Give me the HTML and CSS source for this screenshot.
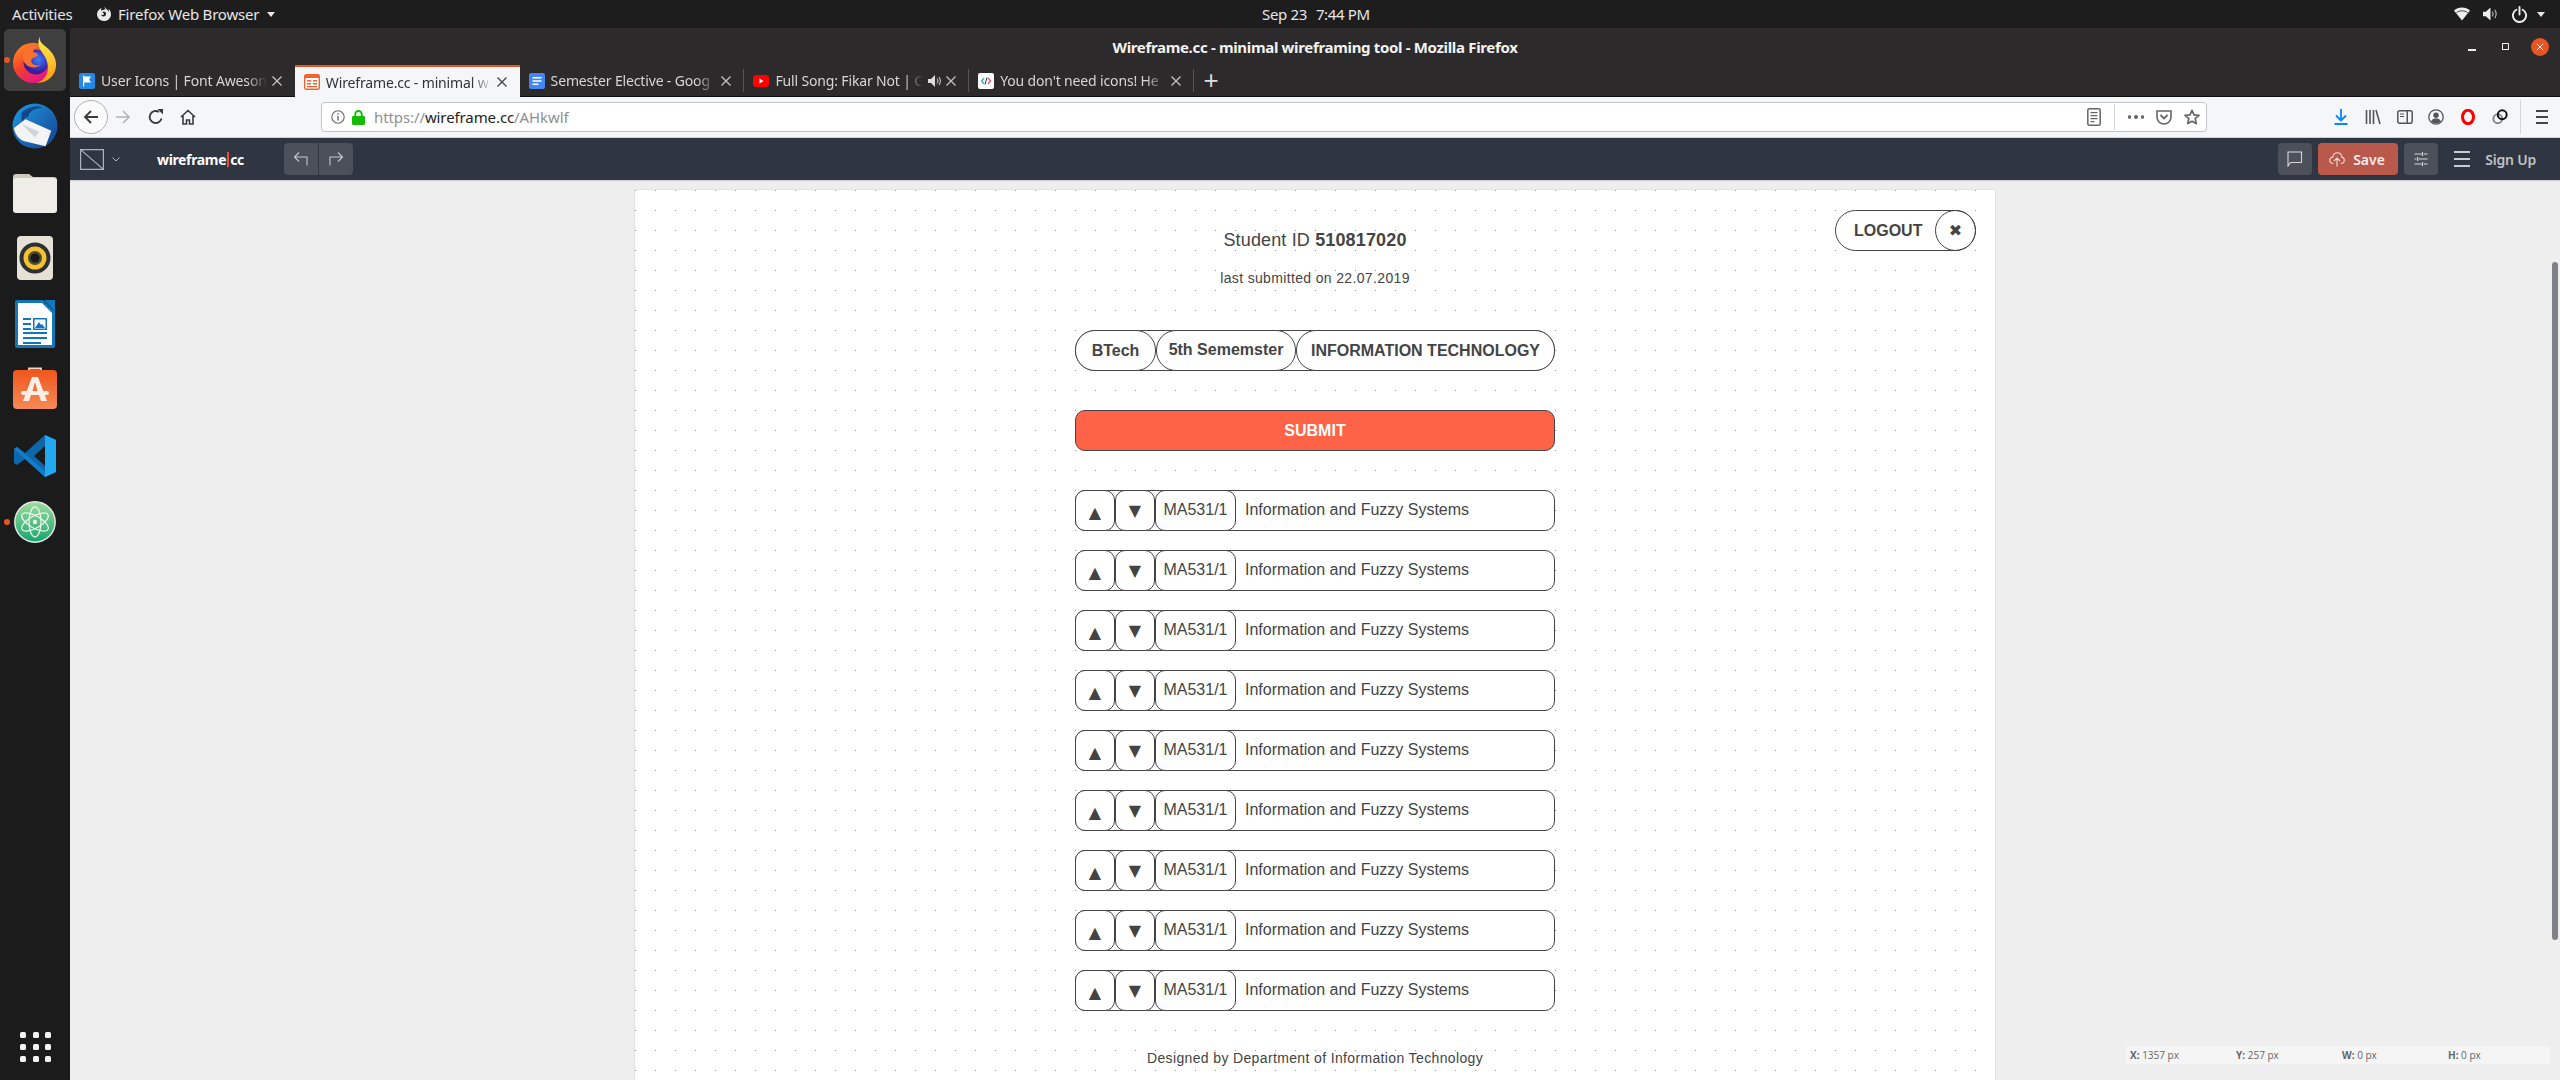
FILE: index.html
```html
<!DOCTYPE html>
<html lang="en">
<head>
<meta charset="utf-8">
<title>Wireframe.cc - minimal wireframing tool - Mozilla Firefox</title>
<link rel="stylesheet" href="styles.css">
</head>
<body>
<header class="topbar">
  <div class="top-left">
    <span class="activities">Activities</span>
    <svg class="app-icon" viewBox="0 0 16 16"><path fill="#e8e8e8" d="M8 1c.3 1 1 1.800 2 2.300C9 3.100 8 3.400 7.500 4 6.400 4 5.500 4.300 5 5c0-1 .1-2 .6-3C3 3 1 5.300 1 8.300 1 12 4 15 8 15s7-3 7-6.800c0-2.700-1.200-4.200-2.500-5.200.4 1 .4 2 .2 2.800C11.800 3.800 10 2.500 8 1zm-.2 4.600c1 0 2.200.8 2.200 2.400 0 1.500-1.200 2.600-2.600 2.500C6 10.400 5.200 9.400 5.300 8.500c.8.800 2.700.5 2.700-.5 0-.7-1-.7-1.300-1.200 0-.6.500-1.200 1.100-1.200z"/></svg>
    <span class="app-name">Firefox Web Browser</span>
    <span class="caret"></span>
  </div>
  <div class="clock"><span>Sep 23</span><span>7:44 PM</span></div>
  <div class="tray">
    <svg class="tray-wifi" viewBox="0 0 16 14"><path fill="#eee" d="M0 3.500C2 1.500 5 .5 8 .5s6 1 8 3l-8 10z"/><path fill="none" stroke="#1d1d1d" stroke-width=".8" d="M2.500 5.500C4 4.400 6 3.800 8 3.800s4 .6 5.500 1.700"/></svg>
    <svg class="tray-vol" viewBox="0 0 16 14"><path fill="#eee" d="M0 4.500h3L8 0v14L3 9.500H0z"/><path fill="none" stroke="#bbb" stroke-width="1.200" d="M10 4.500c1 1.500 1 3.500 0 5M12.500 2.500c2 2.500 2 6.500 0 9"/></svg>
    <svg class="tray-pow" viewBox="0 0 16 16"><path fill="none" stroke="#eee" stroke-width="1.800" stroke-linecap="round" d="M5 3.500a6.200 6.200 0 1 0 6 0M8 1v7"/></svg>
    <span class="caret tray-caret"></span>
  </div>
</header>

<div class="desktop">
  <nav class="dock">
    <div class="dock-item active">
      <span class="run-dot"></span>
      <span class="dock-tile">
        <svg class="ic-48" viewBox="0 0 48 50"><defs><linearGradient id="ffa" x1="0" y1="0" x2=".6" y2="1"><stop offset="0" stop-color="#ff9a1f"/><stop offset=".55" stop-color="#f5402b"/><stop offset="1" stop-color="#e31587"/></linearGradient><linearGradient id="ffb" x1="0" y1="0" x2="0" y2="1"><stop offset="0" stop-color="#fff44f"/><stop offset="1" stop-color="#ff980e"/></linearGradient><radialGradient id="ffc" cx=".6" cy=".4"><stop offset="0" stop-color="#3d7dff"/><stop offset="1" stop-color="#3a1a9e"/></radialGradient></defs><circle cx="22" cy="28" r="21" fill="url(#ffa)"/><circle cx="25" cy="27" r="13" fill="url(#ffc)"/><path fill="url(#ffb)" d="M29 0c-1 5 2 8 6 11 6 5 11 11 11 19 0 10-8 19-20 19 9-3 13-11 11-20-1-8-7-12-9-18-1-4 0-8 1-11z"/><path fill="#f7722c" d="M13 17c3-5 9-8 15-6-4 1-6 4-6 6 4 0 5 2 5 3-2 3-7 2-7 6 0 3 5 6 10 4-4 4-12 4-16-1-4-4-3-9-1-12z"/></svg>
      </span>
    </div>
    <div class="dock-item">
      <svg class="ic-48" viewBox="0 0 48 48"><defs><linearGradient id="tb" x1="0" y1="0" x2="1" y2="1"><stop offset="0" stop-color="#1b9de2"/><stop offset="1" stop-color="#173d8f"/></linearGradient></defs><circle cx="24" cy="24" r="23.500" fill="url(#tb)"/><path fill="#0d2c6c" d="M10 10c6-6 16-8 22-5-8 0-14 4-15 9-3 1-5 3-7 6z" opacity=".7"/><path fill="#f4f4f4" d="M2 26l12-9 27 12-6 16-22-5C7 38 3 32 2 26z"/><path fill="#cfd4dc" d="M10 22l18 8-4 6z"/></svg>
    </div>
    <div class="dock-item">
      <svg class="ic-folder" viewBox="0 0 44 42"><path fill="#cfc9b8" d="M3 3h13l4 3h21c1.500 0 3 1 3 3v8H0V6c0-2 1-3 3-3z"/><rect y="7" width="44" height="35" rx="3" fill="#efede7"/></svg>
    </div>
    <div class="dock-item">
      <svg class="ic-36" viewBox="0 0 36 44"><rect width="36" height="44" rx="4" fill="#e5e1d6"/><circle cx="18" cy="22" r="15.500" fill="#2f2f33"/><circle cx="18" cy="22" r="11.500" fill="#f2c230"/><circle cx="18" cy="22" r="7" fill="#504a30"/><circle cx="18" cy="22" r="4.500" fill="#1a1a1a"/></svg>
    </div>
    <div class="dock-item">
      <svg class="ic-40" viewBox="0 0 40 48"><path fill="#1276b8" d="M0 2a2 2 0 0 1 2-2h26l12 12v34a2 2 0 0 1-2 2H2a2 2 0 0 1-2-2z"/><path fill="#fff" d="M3 3h24l10 10v32H3z"/><path fill="#1276b8" d="M29 0l11 0v12z"/><path fill="#1276b8" d="M8 18h8v2H8zM8 23h8v2H8zM8 28h8v2H8zM8 32h24v2H8zM8 37h24v2H8zM8 42h18v2H8zM18 18h14v12H18z"/><path fill="#fff" d="M19.500 19.500h11v9h-11z"/><path fill="#1276b8" d="M20 28l4-6 2 3 1-1 3 4z"/></svg>
    </div>
    <div class="dock-item">
      <svg class="ic-44" viewBox="0 0 44 42"><defs><linearGradient id="sw" x1="0" y1="0" x2="0" y2="1"><stop offset="0" stop-color="#f0561d"/><stop offset="1" stop-color="#f58a56"/></linearGradient></defs><path fill="none" stroke="#e8d8cc" stroke-width="1.800" d="M16 4V1.500h12V4"/><rect y="3" width="44" height="39" rx="4" fill="url(#sw)"/><path fill="#fbeee6" d="M19 10h6l9 24h-6l-2-6h-8l-2 6h-6zM22 15l-2.500 9h5z"/><rect x="8" y="24" width="28" height="4" rx="2" fill="#fbeee6"/></svg>
    </div>
    <div class="dock-item">
      <svg class="ic-42" viewBox="0 0 42 42"><path fill="#0f6cb3" d="M31 0l11 5v32l-11 5L11 24 3 30l-3-2v-14l3-2 8 6zM31 11L20 21l11 10z" opacity=".95"/><path fill="#23a8f2" d="M31 0l11 5v32l-11 5z"/><path fill="#1385d2" d="M0 14l3-2 28 24v6L0 14z" opacity=".8"/></svg>
    </div>
    <div class="dock-item">
      <span class="run-dot"></span>
      <svg class="ic-42" viewBox="0 0 42 42"><defs><linearGradient id="at" x1="0" y1="0" x2="0" y2="1"><stop offset="0" stop-color="#9fdc9f"/><stop offset="1" stop-color="#16a56e"/></linearGradient></defs><circle cx="21" cy="21" r="20.200" fill="url(#at)" stroke="#e9e9e9" stroke-width="1.400"/><g fill="none" stroke="#e8f5ea" stroke-width="1.300"><ellipse cx="21" cy="21" rx="15" ry="6" transform="rotate(30 21 21)"/><ellipse cx="21" cy="21" rx="15" ry="6" transform="rotate(-30 21 21)"/><ellipse cx="21" cy="21" rx="15" ry="6" transform="rotate(90 21 21)"/></g><circle cx="21" cy="21" r="2.200" fill="#e8f5ea"/></svg>
    </div>
    <div class="dock-grid">
      <i></i><i></i><i></i><i></i><i></i><i></i><i></i><i></i><i></i>
    </div>
  </nav>

  <div class="browser">
    <div class="titlebar">
      <span></span>
      <span class="win-title">Wireframe.cc - minimal wireframing tool - Mozilla Firefox</span>
      <div class="win-controls">
        <span class="win-min"></span>
        <span class="win-max"></span>
        <span class="win-close"><svg class="x-10" viewBox="0 0 10 10"><path fill="none" stroke="#fff" stroke-width="1.200" d="M1 1l8 8M9 1l-8 8"/></svg></span>
      </div>
    </div>

    <div class="tabstrip">
      <div class="tab">
        <svg class="fav" viewBox="0 0 16 16"><rect width="16" height="16" rx="2" fill="#228ae6"/><path fill="#fff" d="M4 2.500h1.200v11H4zM5.200 3.500h6.800l-1.800 3 1.800 3H5.200z"/></svg>
        <span class="tab-text">User Icons | Font Aweson</span>
        <svg class="tab-x" viewBox="0 0 10 10"><path fill="none" stroke="#c4c4c4" stroke-width="1.300" d="M.5.500l9 9M9.500.500l-9 9"/></svg>
      </div>
      <div class="tab tab-active">
        <svg class="fav" viewBox="0 0 16 16"><rect x=".7" y=".7" width="14.600" height="14.600" rx="1.500" fill="#fff" stroke="#f0652f" stroke-width="1.400"/><path fill="#f0652f" d="M1 1h14v3H1zM3 6h4v1.500H3zM3 9h4v1.500H3zM9 6h4v1.500H9zM9 9h4v1.500H9zM3 12h10v1.200H3z"/></svg>
        <span class="tab-text">Wireframe.cc - minimal w</span>
        <svg class="tab-x" viewBox="0 0 10 10"><path fill="none" stroke="#444" stroke-width="1.300" d="M.5.500l9 9M9.500.500l-9 9"/></svg>
      </div>
      <div class="tab tab-sep">
        <svg class="fav" viewBox="0 0 16 16"><rect y="0" width="16" height="19" rx="2" fill="#4285f4" transform="scale(1 .84)"/><path fill="#fff" d="M3.500 4h9v1.500h-9zM3.500 7.300h9v1.500h-9zM3.500 10.600h6v1.500h-6z"/></svg>
        <span class="tab-text">Semester Elective - Goog</span>
        <svg class="tab-x" viewBox="0 0 10 10"><path fill="none" stroke="#c4c4c4" stroke-width="1.300" d="M.5.500l9 9M9.500.500l-9 9"/></svg>
      </div>
      <div class="tab tab-sep">
        <svg class="fav" viewBox="0 0 16 16"><rect y="2" width="16" height="12" rx="3" fill="#f00"/><path fill="#fff" d="M6.500 5.500l4 2.500-4 2.500z"/></svg>
        <span class="tab-text tab-text-audio">Full Song: Fikar Not | C</span>
        <svg class="tab-audio" viewBox="0 0 14 14"><path fill="#ddd" d="M1 5h3l4-4v12L4 9H1z"/><path fill="none" stroke="#ddd" d="M10 4.500c1.200 1.500 1.200 3.500 0 5M12 3c1.800 2.500 1.800 5.500 0 8"/></svg>
        <svg class="tab-x" viewBox="0 0 10 10"><path fill="none" stroke="#c4c4c4" stroke-width="1.300" d="M.5.500l9 9M9.500.500l-9 9"/></svg>
      </div>
      <div class="tab tab-sep">
        <svg class="fav" viewBox="0 0 16 16"><rect width="16" height="16" rx="2" fill="#fff"/><path fill="none" stroke="#29b6c6" stroke-width="1.300" d="M6 5L3.500 8 6 11"/><path fill="none" stroke="#f0506e" stroke-width="1.300" d="M10 5l2.500 3-2.500 3"/><path stroke="#333" stroke-width="1" d="M9 4.500l-2 7"/></svg>
        <span class="tab-text">You don't need icons! He</span>
        <svg class="tab-x" viewBox="0 0 10 10"><path fill="none" stroke="#c4c4c4" stroke-width="1.300" d="M.5.500l9 9M9.500.500l-9 9"/></svg>
      </div>
      <span class="tab-new">+</span>
    </div>

    <div class="navbar">
      <span class="nav-back"><svg class="ic-16" viewBox="0 0 16 16"><path fill="none" stroke="#3a3a3c" stroke-width="1.800" d="M15 8H2M8 2L2 8l6 6"/></svg></span>
      <svg class="ic-16 nav-fwd" viewBox="0 0 16 16"><path fill="none" stroke="#b4b4b6" stroke-width="1.600" d="M1 8h13M8 2l6 6-6 6"/></svg>
      <svg class="ic-16 nav-reload" viewBox="0 0 16 16"><path fill="none" stroke="#3a3a3c" stroke-width="1.800" d="M13.500 9.500A6 6 0 1 1 11 3"/><path fill="#3a3a3c" d="M9.500 0H15v5.500z"/></svg>
      <svg class="ic-16 nav-home" viewBox="0 0 16 16"><path fill="none" stroke="#3a3a3c" stroke-width="1.600" d="M1 8l7-6.500L15 8M3 7v8h3.500v-4h3v4H13V7"/></svg>
      <div class="urlbar">
        <svg class="ic-14" viewBox="0 0 14 14"><circle cx="7" cy="7" r="6.200" fill="none" stroke="#666" stroke-width="1.100"/><path fill="#666" d="M6.300 6h1.400v4.500H6.300zM6.300 3.300h1.400v1.500H6.300z"/></svg>
        <svg class="url-lock" viewBox="0 0 14 16"><path fill="none" stroke="#12bc00" stroke-width="2" d="M3.500 7V4.500a3.500 3.500 0 0 1 7 0V7"/><rect y="6.500" width="14" height="9.500" rx="1.200" fill="#12bc00"/></svg>
        <span class="url-text">https://<b>wireframe.cc</b>/AHkwlf</span>
        <svg class="ic-14 url-reader" viewBox="0 0 14 18"><rect x=".8" y=".8" width="12.400" height="16.400" rx="1.500" fill="none" stroke="#666" stroke-width="1.500"/><path fill="#666" d="M3.500 4h7v1.200h-7zM3.500 7h7v1.200h-7zM3.500 10h7v1.200h-7zM3.500 13h4v1.200h-4z"/></svg>
        <span class="url-sep"></span>
        <span class="url-dots"><i></i><i></i><i></i></span>
        <svg class="ic-16" viewBox="0 0 16 16"><path fill="none" stroke="#666" stroke-width="1.600" d="M1 2h14v6a7 7 0 0 1-14 0z"/><path fill="none" stroke="#666" stroke-width="1.800" d="M4.500 6L8 9.500 11.500 6"/></svg>
        <svg class="ic-16" viewBox="0 0 16 16"><path fill="none" stroke="#666" stroke-width="1.700" stroke-linejoin="round" d="M8 1.300l2 4.600 5 .5-3.800 3.300 1.100 4.900L8 12.200l-4.300 2.400 1.100-4.900L1 6.400l5-.5z"/></svg>
      </div>
      <div class="nav-tools">
        <svg class="ic-16" viewBox="0 0 16 16"><path fill="none" stroke="#0a84ff" stroke-width="1.800" d="M8 0v11M3 6.500L8 11.500l5-5M1.500 15h13"/></svg>
        <svg class="ic-16" viewBox="0 0 16 16"><path fill="none" stroke="#555" stroke-width="1.600" d="M1.500 1v14M5 1v14M8.500 1v14M11 1l4 14"/></svg>
        <svg class="ic-16" viewBox="0 0 16 16"><rect x=".8" y="1.800" width="14.400" height="12.400" rx="2" fill="none" stroke="#555" stroke-width="1.500"/><path fill="#555" d="M9.500 2h1.500v12H9.500zM3 4.500h4v1H3zM3 7h4v1H3z"/></svg>
        <svg class="ic-16" viewBox="0 0 16 16"><circle cx="8" cy="8" r="7.200" fill="none" stroke="#555" stroke-width="1.300"/><circle cx="8" cy="6.300" r="2.700" fill="#555"/><path fill="#555" d="M3 12.500c1-2.500 3-3 5-3s4 .5 5 3c-1.200 1.300-3 2-5 2s-3.800-.7-5-2z"/></svg>
        <svg class="ic-16" viewBox="0 0 16 18"><ellipse cx="8" cy="9" rx="6.200" ry="7.500" fill="none" stroke="#f00" stroke-width="3.400"/></svg>
        <svg class="ic-16" viewBox="0 0 18 18"><circle cx="6.500" cy="11" r="5" fill="none" stroke="#888" stroke-width="2.200"/><circle cx="11.500" cy="6.500" r="5" fill="none" stroke="#111" stroke-width="2.200"/></svg>
        <span class="nav-tools-sep"></span>
        <span class="nav-menu"><i></i><i></i><i></i></span>
      </div>
    </div>

    <div class="appbar">
      <svg class="wf-logo" viewBox="0 0 24 21"><path fill="none" stroke="#aeb3bb" stroke-width="1.200" d="M.6.600h22.800v19.800H.6zM.6.600l22.800 19.800"/></svg>
      <svg class="wf-chev" viewBox="0 0 8 5"><path fill="none" stroke="#aeb3bb" d="M.5.500L4 4 7.500.500"/></svg>
      <span class="wf-brand">wireframe<span class="wf-bar"></span>cc</span>
      <div class="btn-group">
        <span class="tool-btn"><svg class="ic-16" viewBox="0 0 16 16"><path fill="none" stroke="#c5c8ce" stroke-width="1.100" d="M14 14.500V6H2M6 1.500L1.500 6 6 10.500"/></svg></span>
        <span class="tool-btn"><svg class="ic-16" viewBox="0 0 16 16"><path fill="none" stroke="#c5c8ce" stroke-width="1.100" d="M2 14.500V6h12M10 1.500L14.500 6 10 10.500"/></svg></span>
      </div>
      <span class="app-spacer"></span>
      <span class="tool-btn tool-solo"><svg class="ic-16" viewBox="0 0 16 16"><path fill="none" stroke="#d5d7db" stroke-width="1.100" d="M1 1h13.500v10.500H3.500L1 15z"/></svg></span>
      <span class="save-btn"><svg class="ic-16" viewBox="0 0 16 16"><path fill="none" stroke="#f3dcd7" stroke-width="1.100" d="M4.500 12.500C2 12.500.8 11 .8 9.300c0-1.700 1.200-3 2.900-3.200C4.200 3.500 6 1.800 8.300 1.800c2.500 0 4.300 1.800 4.600 4.300 1.500.3 2.400 1.500 2.400 3 0 1.800-1.300 3.400-3.600 3.400M8 15.500V7M5 10l3-3 3 3"/></svg>Save</span>
      <span class="tool-btn tool-solo"><svg class="ic-16" viewBox="0 0 16 16"><path fill="none" stroke="#d5d7db" stroke-width="1.200" d="M1.500 3h7M11 3h3.500M1.500 8h2M6 8h8.500M1.500 13h7M11 13h3.500M9.500 1v4M4.700 6v4M9.500 11v4"/></svg></span>
      <span class="app-burger"><i></i><i></i><i></i></span>
      <span class="signup">Sign Up</span>
    </div>

    <main class="workspace">
      <section class="canvas">
        <div class="logout">
          <span class="logout-label">LOGOUT</span>
          <span class="logout-x">✖</span>
        </div>
        <div class="sheet">
          <h1 class="student">Student ID <b>510817020</b></h1>
          <p class="submitted">last submitted on 22.07.2019</p>
          <div class="pills">
            <span class="pill pill-a">BTech</span>
            <span class="pill pill-b">5th Sememster</span>
            <span class="pill pill-c">INFORMATION TECHNOLOGY</span>
          </div>
          <button class="submit" type="button">SUBMIT</button>
          <ul class="courses">
            <li class="course"><span class="move move-up">▲</span><span class="move">▼</span><span class="code">MA531/1</span><span class="name">Information and Fuzzy Systems</span></li>
            <li class="course"><span class="move move-up">▲</span><span class="move">▼</span><span class="code">MA531/1</span><span class="name">Information and Fuzzy Systems</span></li>
            <li class="course"><span class="move move-up">▲</span><span class="move">▼</span><span class="code">MA531/1</span><span class="name">Information and Fuzzy Systems</span></li>
            <li class="course"><span class="move move-up">▲</span><span class="move">▼</span><span class="code">MA531/1</span><span class="name">Information and Fuzzy Systems</span></li>
            <li class="course"><span class="move move-up">▲</span><span class="move">▼</span><span class="code">MA531/1</span><span class="name">Information and Fuzzy Systems</span></li>
            <li class="course"><span class="move move-up">▲</span><span class="move">▼</span><span class="code">MA531/1</span><span class="name">Information and Fuzzy Systems</span></li>
            <li class="course"><span class="move move-up">▲</span><span class="move">▼</span><span class="code">MA531/1</span><span class="name">Information and Fuzzy Systems</span></li>
            <li class="course"><span class="move move-up">▲</span><span class="move">▼</span><span class="code">MA531/1</span><span class="name">Information and Fuzzy Systems</span></li>
            <li class="course"><span class="move move-up">▲</span><span class="move">▼</span><span class="code">MA531/1</span><span class="name">Information and Fuzzy Systems</span></li>
          </ul>
          <p class="credit">Designed by Department of Information Technology</p>
        </div>
      </section>
      <span class="scroll-thumb"></span>
      <div class="coords">
        <span><b>X:</b> 1357 px</span>
        <span><b>Y:</b> 257 px</span>
        <span><b>W:</b> 0 px</span>
        <span><b>H:</b> 0 px</span>
      </div>
    </main>
  </div>
</div>
</body>
</html>
```

FILE: styles.css
```css
* { box-sizing: border-box; }
html, body { margin: 0; height: 100%; overflow: hidden; }
body {
  width: 2560px;
  height: 1080px;
  display: flex;
  flex-direction: column;
  background: #1c1c1c;
  font-family: "Noto Sans", sans-serif;
}
svg { display: block; flex: none; }
i { display: block; }

/* GNOME top bar */
.topbar {
  flex: none;
  height: 28px;
  display: flex;
  align-items: center;
  background: #1d1d1d;
  color: #e6e6e6;
  font-size: 15px;
  letter-spacing: -.2px;
}
.top-left { width: 1262px; display: flex; align-items: center; padding-left: 12px; }
.activities { width: 84px; }
.app-icon { width: 16px; height: 16px; }
.app-name { margin-left: 6px; width: 149px; }
.caret { width: 0; height: 0; border: 4.500px solid transparent; border-top: 5px solid #e6e6e6; border-bottom: 0; }
.clock { display: flex; gap: 9px; letter-spacing: -.35px; }
.tray { margin-left: auto; display: flex; align-items: center; padding-right: 15px; }
.tray-wifi { width: 16px; height: 14px; }
.tray-vol { width: 15px; height: 14px; margin-left: 13px; }
.tray-pow { width: 17px; height: 17px; margin-left: 13px; }
.tray-caret { margin-left: 9px; }

.desktop { flex: 1; min-height: 0; display: flex; }

/* Ubuntu dock */
.dock { flex: none; width: 70px; display: flex; flex-direction: column; background: #1b1b1b; position: relative; }
.dock-item { flex: none; height: 66px; display: flex; align-items: center; justify-content: center; position: relative; }
.dock-item:first-child { margin-top: -1px; }
.dock-tile { width: 62px; height: 62px; border-radius: 5px; background: #3f3f3f; display: flex; align-items: center; justify-content: center; }
.run-dot { position: absolute; left: 4px; top: 50%; width: 6px; height: 6px; margin-top: -3px; border-radius: 50%; background: #e95420; }
.ic-48 { width: 46px; height: 48px; }
.ic-folder { width: 44px; height: 42px; margin-top: -1px; }
.ic-36 { width: 36px; height: 44px; }
.ic-40 { width: 40px; height: 48px; }
.ic-44 { width: 44px; height: 42px; margin-top: -4px; }
.ic-42 { width: 42px; height: 42px; }
.dock-grid { margin-top: auto; margin-bottom: 18px; margin-left: 20px; width: 32px; display: grid; grid-template-columns: repeat(3, 6px); gap: 6px 6.500px; }
.dock-grid i { height: 6px; background: #f2f2f2; border-radius: 1.500px; }

.browser { flex: 1; min-width: 0; display: flex; flex-direction: column; }

/* Window title */
.titlebar {
  flex: none;
  height: 37px;
  display: grid;
  grid-template-columns: 1fr auto 1fr;
  align-items: center;
  background: #2c2a2a;
}
.win-title { color: #f2f2f2; font-size: 15px; font-weight: 700; letter-spacing: -.33px; }
.win-controls { display: flex; align-items: center; justify-content: flex-end; padding-right: 11px; }
.win-min { width: 8px; height: 2px; background: #eee; margin-top: 7px; }
.win-max { width: 7px; height: 7px; border: 1.500px solid #eee; margin-left: 26px; }
.win-close { width: 18px; height: 18px; margin-left: 22px; border-radius: 50%; background: #e95420; display: flex; align-items: center; justify-content: center; }
.x-10 { width: 8px; height: 8px; }

/* Tabs */
.tabstrip {
  flex: none;
  height: 32px;
  display: flex;
  align-items: stretch;
  background: #2c2a2a;
  border-bottom: 1px solid #0e0e0e;
}
.tab {
  flex: none;
  width: 224.800px;
  display: flex;
  align-items: center;
  padding: 0 13px 0 9px;
  color: #d6d6d6;
  font-size: 14px;
  letter-spacing: -.15px;
  position: relative;
}
.tab-sep::after { content: ""; position: absolute; right: 0; top: 4px; bottom: 4px; width: 1px; background: #555; }
.tab-active { background: #f5f6f7; color: #333; border-top: 2px solid #e95420; margin-bottom: -1px; }
.fav { width: 16px; height: 16px; }
.tab-text {
  flex: 1;
  min-width: 0;
  margin-left: 6px;
  white-space: nowrap;
  -webkit-mask-image: linear-gradient(to right, #000 88%, transparent);
  mask-image: linear-gradient(to right, #000 88%, transparent);
}
.tab-audio { width: 14px; height: 14px; margin-left: 4px; }
.tab-x { width: 10px; height: 10px; margin-left: 5px; }
.tab-new { margin-left: 8px; width: 18px; color: #ddd; font-size: 26px; font-weight: 300; line-height: 30px; text-align: center; font-family: "Liberation Sans", sans-serif; }

/* Navigation */
.navbar {
  flex: none;
  height: 41px;
  display: flex;
  align-items: center;
  padding-left: 4px;
  background: #f5f6f7;
  border-bottom: 1px solid #ccced1;
}
.nav-back { flex: none; width: 34px; height: 34px; border: 1px solid #b1b1b3; border-radius: 50%; background: #fbfbfc; display: flex; align-items: center; justify-content: center; }
.ic-16 { width: 16px; height: 16px; }
.ic-14 { width: 14px; height: 14px; }
.nav-fwd { margin-left: 7px; }
.nav-reload { margin-left: 17px; }
.nav-home { margin-left: 16px; }
.urlbar {
  flex: none;
  width: 1886px;
  height: 30px;
  margin-left: 125px;
  display: flex;
  align-items: center;
  padding: 0 6px 0 9px;
  background: #fff;
  border: 1px solid #c1c4c9;
  border-radius: 4px;
}
.url-lock { width: 13px; height: 15px; margin-left: 7px; }
.url-text { flex: 1; margin-left: 9px; font-size: 15px; letter-spacing: -.1px; color: #8f8f93; }
.url-text b { font-weight: 400; color: #222; }
.url-reader { height: 18px; }
.url-sep { width: 1px; height: 26px; margin: 0 13px; background: #d0d2d5; }
.url-dots { width: 16px; display: flex; gap: 3px; margin-right: 12px; }
.url-dots i { width: 4px; height: 4px; border-radius: 50%; background: #666; }
.urlbar .ic-16:last-child { margin-left: 12px; }
.nav-tools { margin-left: 126px; display: flex; align-items: center; gap: 15.800px; }
.nav-tools-sep { width: 1px; height: 34px; background: #d4d6d9; margin-left: -4px; }
.nav-menu { width: 12px; margin-left: -1px; display: flex; flex-direction: column; gap: 4px; }
.nav-menu i { height: 2px; background: #444; }

/* Wireframe.cc toolbar */
.appbar {
  flex: none;
  height: 42px;
  display: flex;
  align-items: center;
  padding-left: 10px;
  background: #2f3541;
  box-shadow: 0 1px 1px rgba(0,0,0,.12);
  position: relative;
  z-index: 1;
}
.wf-logo { width: 24px; height: 21px; }
.wf-chev { width: 8px; height: 5px; margin-left: 8px; }
.wf-brand { margin-left: 37px; width: 127px; color: #fff; font-size: 14px; font-weight: 700; letter-spacing: -.35px; }
.wf-bar { display: inline-block; width: 2px; height: 15px; margin: 0 1px; vertical-align: -2px; background: #e8502f; }
.btn-group { display: flex; gap: 1px; }
.tool-btn { flex: none; width: 34px; height: 32px; background: #4b505b; border-radius: 4px; display: flex; align-items: center; justify-content: center; }
.btn-group .tool-btn:first-child { border-radius: 4px 0 0 4px; }
.btn-group .tool-btn:last-child { border-radius: 0 4px 4px 0; }
.app-spacer { flex: 1; }
.save-btn { flex: none; width: 80px; height: 32px; margin: 0 6px; display: flex; align-items: center; gap: 8px; padding-left: 11px; border-radius: 4px; background: #b9594c; color: #f7e9e6; font-size: 14px; font-weight: 600; }
.app-burger { width: 16px; margin-left: 16px; display: flex; flex-direction: column; gap: 5px; }
.app-burger i { height: 2px; background: #c9ccd1; }
.signup { margin-left: 15px; margin-right: 24px; color: #c0c2c6; font-size: 14px; font-weight: 600; letter-spacing: -.2px; }

/* Workspace */
.workspace {
  flex: 1;
  min-height: 0;
  position: relative;
  overflow: hidden;
  display: flex;
  justify-content: center;
  padding-top: 10px;
  background: #eee;
}
.canvas {
  flex: none;
  width: 1360px;
  height: 1000px;
  position: relative;
  background-color: #fff;
  background-image: radial-gradient(circle at .5px .5px, #999 1px, transparent 1px);
  background-size: 20px 20px;
  box-shadow: 0 0 1px rgba(0,0,0,.3);
  font-family: "Liberation Sans", sans-serif;
  color: #444;
}
.sheet { width: 480px; margin: 0 auto; display: flex; flex-direction: column; align-items: stretch; padding-top: 39px; }
.student { margin: 0; height: 22px; font-size: 18px; font-weight: 400; line-height: 22px; letter-spacing: .15px; text-align: center; }
.submitted { margin: 18px 0 0; height: 18px; font-size: 14px; line-height: 18px; letter-spacing: .35px; text-align: center; }

.pills {
  margin-top: 43px;
  height: 41px;
  display: flex;
  border: 1px solid #444;
  border-radius: 20px;
  background: #fff;
  font-size: 16px;
  font-weight: 700;
}
.pill { height: 41px; margin-top: -1px; border: 1px solid #444; border-radius: 20px; display: flex; align-items: center; justify-content: center; background: #fff; }
.pill-a { width: 81px; margin-left: -1px; }
.pill-b { width: 140px; padding-bottom: 2px; }
.pill-c { flex: 1; margin-right: -1px; }

.submit {
  margin-top: 39px;
  height: 41px;
  padding: 0;
  border: 1px solid #444;
  border-radius: 10px;
  background: #ff6347;
  color: #fff;
  font: 700 16px "Liberation Sans", sans-serif;
}

.courses { list-style: none; margin: 39px 0 0; padding: 0; display: flex; flex-direction: column; gap: 19px; }
.course {
  height: 41px;
  display: flex;
  border: 1px solid #444;
  border-radius: 10px;
  background: #fff;
  font-size: 16px;
}
.move, .code { height: 41px; margin-top: -1px; border: 1px solid #444; border-radius: 10px; display: flex; align-items: center; justify-content: center; background: #fff; }
.move { width: 40px; font-family: "DejaVu Sans", sans-serif; font-size: 16px; }
.move-up { margin-left: -1px; padding-top: 4px; }
.code { width: 81px; padding-bottom: 1px; }
.name { margin-left: 9px; line-height: 37px; }

.credit { margin: 37px 0 0; height: 20px; font-size: 14px; line-height: 20px; letter-spacing: .36px; text-align: center; white-space: nowrap; }

.logout {
  position: absolute;
  left: 1200px;
  top: 20px;
  width: 141px;
  height: 41px;
  display: flex;
  justify-content: space-between;
  align-items: center;
  border: 1px solid #444;
  border-radius: 21px;
  background: #fff;
  font-size: 16px;
  font-weight: 700;
}
.logout-label { margin-left: 18px; }
.logout-x { width: 41px; height: 41px; margin-right: -1px; border: 1px solid #444; border-radius: 50%; font-size: 16px; line-height: 39px; text-align: center; font-family: "DejaVu Sans", sans-serif; }

.scroll-thumb { position: absolute; right: 2px; top: 82px; width: 6px; height: 678px; border-radius: 3px; background: #7f8186; }
.coords {
  position: absolute;
  right: 10px;
  bottom: 16px;
  width: 424px;
  height: 18px;
  display: grid;
  grid-template-columns: repeat(4, 106px);
  align-items: center;
  padding-left: 4px;
  background: #f5f5f5;
  color: #666;
  font-family: "Open Sans", sans-serif;
  font-size: 10px;
}
```
